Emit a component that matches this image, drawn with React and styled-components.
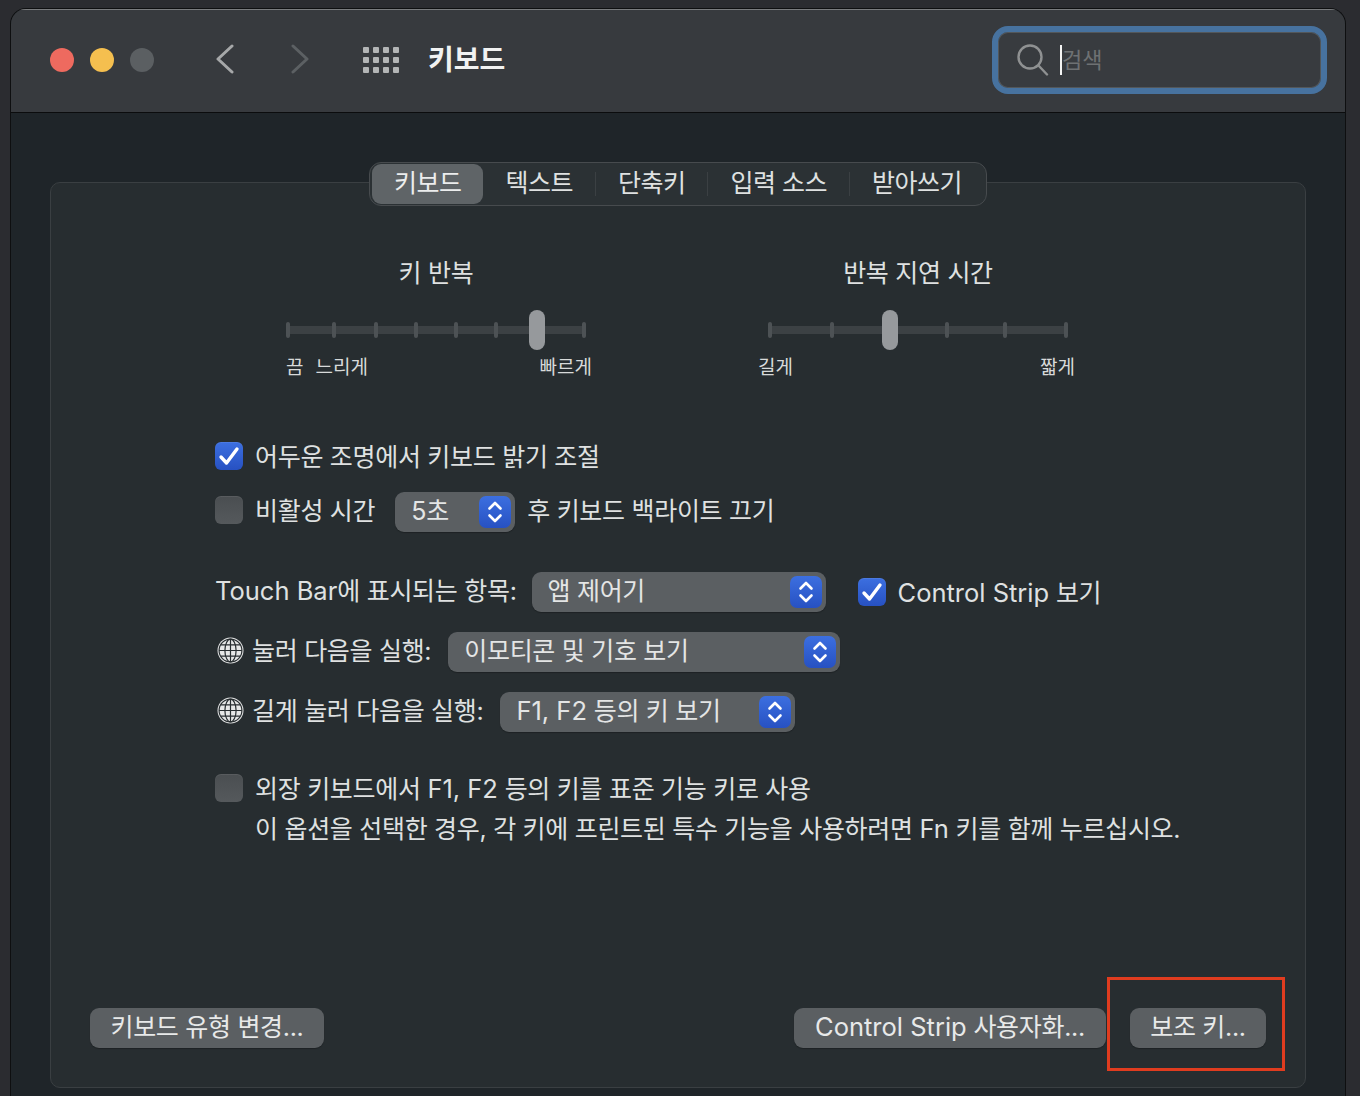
import styled, { createGlobalStyle } from "styled-components";

const GlobalStyle = createGlobalStyle`
	html, body {
		margin: 0;
		height: 1096px;
		overflow: hidden;
		background: #2b2c30;
		font-family: "Inter", "Noto Sans CJK KR", sans-serif;
		font-size: 25px;
		letter-spacing: -0.3px;
		color: #dfe1e1;
	}
	* {
		box-sizing: border-box;
	}
`;

const Page = styled.div`
	padding: 8px 14px 0 10px;
	height: 1096px;
`;

const Window = styled.div`
	height: 1088px;
	display: flex;
	flex-direction: column;
	background: #1f2529;
	border: 1px solid #0e0f10;
	border-bottom: none;
	border-radius: 16px 16px 0 0;
	overflow: hidden;
`;

const Header = styled.header`
	height: 104px;
	flex: none;
	display: flex;
	align-items: center;
	padding: 0 18px 2px 39px;
	background: #373a3e;
	border-top: 1px solid #7a7c7e;
	border-bottom: 1px solid #0b0c0d;
`;

const Lights = styled.div`
	display: flex;
	gap: 16px;
	margin-right: 61px;
`;

const Light = styled.span`
	width: 24px;
	height: 24px;
	border-radius: 50%;
	background: ${(p) => p.$color};
`;

const NavIcon = styled.svg`
	width: 20px;
	height: 30px;
	flex: none;
	margin: 0 ${(p) => p.$gap}px 2px 0;
`;

const Title = styled.h1`
	margin: 0 0 1px 29px;
	font-size: 28px;
	font-weight: 700;
	line-height: 36px;
	letter-spacing: 0;
	color: #f1f2f2;
`;

const SearchField = styled.div`
	margin-left: auto;
	width: 335px;
	height: 68px;
	display: flex;
	align-items: center;
	padding: 0 0 0 19px;
	background: #383b3f;
	border: 6px solid #47729f;
	border-radius: 16px;
	box-shadow: inset 0 0 0 1px #53575a;
`;

const SearchIcon = styled.svg`
	width: 32px;
	height: 32px;
	flex: none;
`;

const Caret = styled.span`
	width: 2px;
	height: 30px;
	margin-left: 11px;
	background: #f4f4f4;
`;

const Placeholder = styled.span`
	color: #6e7173;
	font-size: 22px;
	line-height: 36px;
	letter-spacing: 0;
`;

const Body = styled.main`
	flex: 1;
	display: flex;
	flex-direction: column;
	padding: 69px 39px 8px;
`;

const Panel = styled.section`
	flex: 1;
	display: flex;
	flex-direction: column;
	background: #272d30;
	border: 1px solid #3a3f42;
	border-radius: 10px;
	padding-bottom: 39px;
`;

const TabBar = styled.nav`
	align-self: center;
	display: flex;
	align-items: center;
	height: 44px;
	margin-top: -21px;
	padding: 1px 2px;
	background: #2b3134;
	border: 1px solid #474b4e;
	border-radius: 12px;
`;

const Tab = styled.div`
	height: 40px;
	padding: 0 22px;
	line-height: 38px;
	letter-spacing: -0.5px;
	border-radius: 9px;
	white-space: nowrap;
	background: ${(p) => (p.$active ? "#5f6467" : "transparent")};
	color: ${(p) => (p.$active ? "#eceded" : "#dfe1e1")};
`;

const TabDivider = styled.span`
	width: 1px;
	height: 24px;
	background: #3b4043;
`;

const Sliders = styled.div`
	display: flex;
	gap: 182px;
	margin: 51px 0 0 235px;
`;

const SliderGroup = styled.div`
	width: 300px;
	display: flex;
	flex-direction: column;
`;

const SliderTitle = styled.div`
	text-align: center;
	line-height: 32px;
`;

const SliderTrack = styled.div`
	position: relative;
	height: 40px;
	margin-top: 21px;

	&::before {
		content: "";
		position: absolute;
		left: 0;
		right: 0;
		top: 16px;
		height: 8px;
		background: #3c4144;
	}
`;

const Tick = styled.span`
	position: absolute;
	top: 12px;
	width: 4px;
	height: 16px;
	border-radius: 2px;
	background: #4d5255;
`;

const Knob = styled.span`
	position: absolute;
	top: 0;
	width: 16px;
	height: 40px;
	border-radius: 8px;
	background: #96999c;
`;

const SliderLabels = styled.div`
	display: flex;
	gap: 12px;
	margin: 6px ${(p) => p.$right}px 0 ${(p) => p.$left}px;
	font-size: 19px;
	line-height: 24px;
	letter-spacing: 0;
	color: #d8dada;
`;

const LabelEnd = styled.span`
	margin-left: auto;
`;

const Options = styled.div`
	display: flex;
	flex-direction: column;
	margin: 58px 0 0 164px;
`;

const Row = styled.div`
	display: flex;
	align-items: flex-start;
	margin-top: ${(p) => p.$top || 0}px;
	line-height: 38px;
	white-space: nowrap;
`;

const Latin = styled.span`
	font-size: 25.5px;
	letter-spacing: 0;
`;

const Check = styled.span`
	width: 28px;
	height: 28px;
	flex: none;
	display: flex;
	align-items: center;
	justify-content: center;
	margin: ${(p) => p.$top || 4}px 12px 0 ${(p) => p.$left || 0}px;
	border-radius: 6px;
	background: ${(p) =>
		p.$on
			? "linear-gradient(#3c6fe0, #2751c2)"
			: "linear-gradient(#4a4e51, #55595c)"};
	box-shadow: inset 0 1px 0 rgba(255, 255, 255, 0.08);
`;

const CheckedLabel = styled.span`
	margin-top: 2px;
`;

const CheckMark = styled.svg`
	width: 22px;
	height: 20px;
`;

const GlobeIcon = styled.svg`
	width: 27px;
	height: 27px;
	flex: none;
	margin: 5px 8px 0 2px;
`;

const Select = styled.div`
	width: ${(p) => p.$width}px;
	height: 40px;
	flex: none;
	display: flex;
	align-items: center;
	justify-content: space-between;
	margin: 0 ${(p) => p.$after || 0}px 0 ${(p) => p.$before}px;
	padding: 0 4px 2px 16px;
	border-radius: 9px;
	background: #5b5f62;
	color: #e4e5e5;
	box-shadow: 0 1px 1px rgba(0, 0, 0, 0.25);
`;

const Stepper = styled.span`
	width: 32px;
	height: 32px;
	display: flex;
	align-items: center;
	justify-content: center;
	margin-top: 2px;
	border-radius: 7px;
	background: linear-gradient(#3c6fe0, #2751c2);
`;

const StepperIcon = styled.svg`
	width: 18px;
	height: 26px;
`;

const Hint = styled.div`
	margin: 1px 0 0 40px;
	line-height: 40px;
	white-space: nowrap;
`;

const Footer = styled.div`
	margin-top: auto;
	display: flex;
	align-items: center;
	padding: 0 39px;
`;

const ButtonGroup = styled.div`
	margin-left: auto;
	display: flex;
	gap: 24px;
`;

const Button = styled.button`
	width: ${(p) => p.$width}px;
	height: 40px;
	padding: 0 0 2px;
	border: none;
	border-radius: 9px;
	background: #5b5f62;
	color: #e8e9e9;
	font: inherit;
	line-height: 38px;
	letter-spacing: inherit;
	white-space: nowrap;
	box-shadow: 0 1px 1px rgba(0, 0, 0, 0.25);
`;

const HighlightWrap = styled.div`
	position: relative;
`;

const Highlight = styled.span`
	position: absolute;
	left: -23px;
	top: -31px;
	width: 178px;
	height: 94px;
	border: 3px solid #e03c1f;
	pointer-events: none;
`;

const repeatTicks = [0, 46, 88, 128, 168, 208, 296];
const delayTicks = [0, 62, 120, 177, 235, 296];

const StepperGlyph = () => (
	<StepperIcon viewBox="0 0 18 26" fill="none" stroke="#fff" strokeWidth="2.6" strokeLinecap="round" strokeLinejoin="round">
		<path d="M3.5 9.5 9 4l5.5 5.5" />
		<path d="M3.5 16.5 9 22l5.5-5.5" />
	</StepperIcon>
);

const Checkmark = () => (
	<CheckMark viewBox="0 0 22 20" fill="none" stroke="#fff" strokeWidth="3.4" strokeLinecap="round" strokeLinejoin="round">
		<path d="M3 11l5.5 6L19 3" />
	</CheckMark>
);

const Globe = () => (
	<GlobeIcon viewBox="0 0 27 27" fill="none">
		<circle cx="13.5" cy="13.5" r="13" fill="#e6e7e7" />
		<g stroke="#272d30" strokeWidth="1.2">
			<circle cx="13.5" cy="13.5" r="11.4" />
			<ellipse cx="13.5" cy="13.5" rx="5.6" ry="11.4" />
			<path d="M13.5 2.1v22.8M2.1 13.5h22.8M4 7.8h19M4 19.2h19" />
		</g>
	</GlobeIcon>
);

const Slider = ({ title, ticks, knob, labels, left, right }) => (
	<SliderGroup>
		<SliderTitle>{title}</SliderTitle>
		<SliderTrack>
			{ticks.map((x) => (
				<Tick key={x} style={{ left: x }} />
			))}
			<Knob style={{ left: knob }} />
		</SliderTrack>
		<SliderLabels $left={left} $right={right}>
			{labels.slice(0, -1).map((t) => (
				<span key={t}>{t}</span>
			))}
			<LabelEnd>{labels[labels.length - 1]}</LabelEnd>
		</SliderLabels>
	</SliderGroup>
);

export default function App() {
	return (
		<Page>
			<GlobalStyle />
			<Window>
				<Header>
					<Lights>
						<Light $color="#ee6a5f" />
						<Light $color="#f5bf4f" />
						<Light $color="#5b5f62" />
					</Lights>
					<NavIcon $gap={55} viewBox="0 0 20 30" fill="none" stroke="#a6a8a9" strokeWidth="3" strokeLinecap="round" strokeLinejoin="round">
						<path d="M17 2 3 15l14 13" />
					</NavIcon>
					<NavIcon $gap={53} viewBox="0 0 20 30" fill="none" stroke="#5c6063" strokeWidth="3" strokeLinecap="round" strokeLinejoin="round">
						<path d="M3 2l14 13L3 28" />
					</NavIcon>
					<svg width="36" height="26" viewBox="0 0 36 26" fill="#b3b5b6">
						{[0, 10, 20].map((y) =>
							[0, 10, 20, 30].map((x) => (
								<rect key={`${x}-${y}`} x={x} y={y} width="6" height="6" rx="1" />
							)),
						)}
					</svg>
					<Title>키보드</Title>
					<SearchField>
						<SearchIcon viewBox="0 0 32 32" fill="none" stroke="#8f9192" strokeWidth="2.4" strokeLinecap="round">
							<circle cx="13" cy="13" r="11.5" />
							<path d="M21.5 21.5 30 30.5" />
						</SearchIcon>
						<Caret />
						<Placeholder>검색</Placeholder>
					</SearchField>
				</Header>
				<Body>
					<Panel>
						<TabBar>
							<Tab $active>키보드</Tab>
							<Tab>텍스트</Tab>
							<TabDivider />
							<Tab>단축키</Tab>
							<TabDivider />
							<Tab>입력 소스</Tab>
							<TabDivider />
							<Tab>받아쓰기</Tab>
						</TabBar>
						<Sliders>
							<Slider title="키 반복" ticks={repeatTicks} knob={243} labels={["끔", "느리게", "빠르게"]} left={0} right={-6} />
							<Slider title="반복 지연 시간" ticks={delayTicks} knob={114} labels={["길게", "짧게"]} left={-10} right={-7} />
						</Sliders>
						<Options>
							<Row>
								<Check $on>
									<Checkmark />
								</Check>
								어두운 조명에서 키보드 밝기 조절
							</Row>
							<Row $top={16}>
								<Check />
								비활성 시간
								<Select $width={120} $before={20} $after={12}>
									5초
									<Stepper>
										<StepperGlyph />
									</Stepper>
								</Select>
								후 키보드 백라이트 끄기
							</Row>
							<Row $top={40}>
								<span>
									<Latin>Touch Bar</Latin>에 표시되는 항목:
								</span>
								<Select $width={294} $before={15}>
									앱 제어기
									<Stepper>
										<StepperGlyph />
									</Stepper>
								</Select>
								<Check $on $left={32} $top={6}>
									<Checkmark />
								</Check>
								<CheckedLabel>
									<Latin>Control Strip</Latin> 보기
								</CheckedLabel>
							</Row>
							<Row $top={20}>
								<Globe />
								눌러 다음을 실행:
								<Select $width={392} $before={17}>
									이모티콘 및 기호 보기
									<Stepper>
										<StepperGlyph />
									</Stepper>
								</Select>
							</Row>
							<Row $top={20}>
								<Globe />
								길게 눌러 다음을 실행:
								<Select $width={295} $before={17}>
									<span>
										<Latin>F1, F2</Latin> 등의 키 보기
									</span>
									<Stepper>
										<StepperGlyph />
									</Stepper>
								</Select>
							</Row>
							<Row $top={38}>
								<Check />
								<span>
									외장 키보드에서 <Latin>F1, F2</Latin> 등의 키를 표준 기능 키로 사용
								</span>
							</Row>
							<Hint>
								이 옵션을 선택한 경우, 각 키에 프린트된 특수 기능을 사용하려면 <Latin>Fn</Latin> 키를 함께 누르십시오.
							</Hint>
						</Options>
						<Footer>
							<Button $width={234}>키보드 유형 변경...</Button>
							<ButtonGroup>
								<Button $width={312}>
									<Latin>Control Strip</Latin> 사용자화...
								</Button>
								<HighlightWrap>
									<Button $width={136}>보조 키...</Button>
									<Highlight />
								</HighlightWrap>
							</ButtonGroup>
						</Footer>
					</Panel>
				</Body>
			</Window>
		</Page>
	);
}
